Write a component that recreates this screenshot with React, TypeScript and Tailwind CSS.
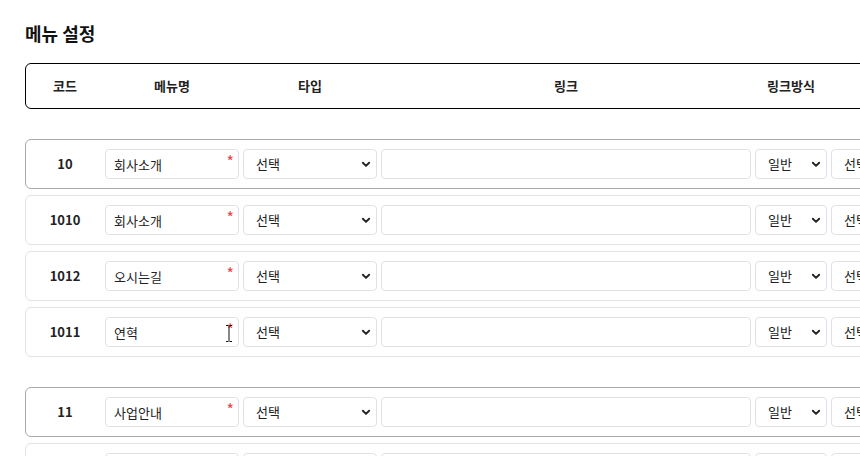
import React from 'react';

type Row = { code: string; name: string; parent?: boolean };

const groups: Row[][] = [
  [
    { code: '10', name: '회사소개', parent: true },
    { code: '1010', name: '회사소개' },
    { code: '1012', name: '오시는길' },
    { code: '1011', name: '연혁' },
  ],
  [
    { code: '11', name: '사업안내', parent: true },
    { code: '1110', name: '사업분야' },
  ],
];

const Chevron = () => (
  <svg
    className="pointer-events-none absolute right-[6px] top-1/2 -translate-y-1/2"
    width="10"
    height="10"
    viewBox="0 0 16 16"
    fill="none"
    stroke="#222"
    strokeWidth="3"
    strokeLinecap="round"
    strokeLinejoin="round"
  >
    <path d="M3 6l5 5 5-5" />
  </svg>
);

const Select = ({ value, width }: { value: string; width: string }) => (
  <div className={`relative h-[30px] shrink-0 ${width}`}>
    <select
      defaultValue={value}
      className="h-full w-full appearance-none rounded-[4px] border border-[#dee2e6] bg-white pl-3 text-[13px] text-[#222] outline-none"
    >
      <option>{value}</option>
    </select>
    <Chevron />
  </div>
);

const IBeam = () => (
  <svg className="pointer-events-none absolute right-[6px] top-[8px]" width="8" height="17" viewBox="0 0 8 17" fill="none" stroke="#111" strokeWidth="1">
    <path d="M1 0.5h2.5M4.5 0.5h2.5M4 1v15M1 16.5h2.5M4.5 16.5h2.5" />
  </svg>
);

const MenuRow = ({ row, cursor }: { row: Row; cursor?: boolean }) => (
  <div
    className={`flex h-[50px] w-[1200px] items-center gap-1 rounded-[6px] border bg-white ${
      row.parent ? 'border-[#a9a9a9]' : 'border-[#e4e4e4]'
    }`}
  >
    <div className="w-[75px] shrink-0 pl-[3px] text-center text-[13px] font-semibold text-[#222]">{row.code}</div>
    <div className="relative h-[30px] w-[134px] shrink-0">
      <input
        defaultValue={row.name}
        className="h-full w-full rounded-[4px] border border-[#dee2e6] bg-white pl-2 text-[13px] text-[#222] outline-none"
      />
      <span className="absolute right-[5px] top-[4px] text-[16px] leading-none text-[#f43f3f]">*</span>
      {cursor && <IBeam />}
    </div>
    <Select value="선택" width="w-[134px]" />
    <input className="h-[30px] w-[370px] shrink-0 rounded-[4px] border border-[#dee2e6] bg-white outline-none" />
    <Select value="일반" width="w-[72px]" />
    <Select value="선택" width="w-[110px]" />
  </div>
);

const App = () => {
  return (
    <div
      className="h-[456px] w-[860px] overflow-hidden bg-white pl-[25px] pt-[19px]"
      style={{ fontFamily: '"Noto Sans CJK KR", "Noto Sans", sans-serif' }}
    >
      <h1 className="h-[28px] text-[18px] font-bold leading-[28px] text-[#111]">메뉴 설정</h1>

      {/* header */}
      <div className="mt-[16px] flex h-[46px] w-[1200px] items-center gap-1 rounded-[6px] border border-black text-[13px] font-semibold text-[#222]">
        <div className="w-[75px] shrink-0 pl-[3px] text-center">코드</div>
        <div className="w-[134px] shrink-0 text-center">메뉴명</div>
        <div className="w-[134px] shrink-0 text-center">타입</div>
        <div className="w-[370px] shrink-0 text-center">링크</div>
        <div className="w-[72px] shrink-0 text-center">링크방식</div>
      </div>

      <div className="mt-[30px] flex flex-col gap-[30px]">
        {groups.map((g, gi) => (
          <div key={gi} className="flex flex-col gap-[6px]">
            {g.map((r) => (
              <MenuRow key={r.code} row={r} cursor={r.code === '1011'} />
            ))}
          </div>
        ))}
      </div>
    </div>
  );
};

export default App;
